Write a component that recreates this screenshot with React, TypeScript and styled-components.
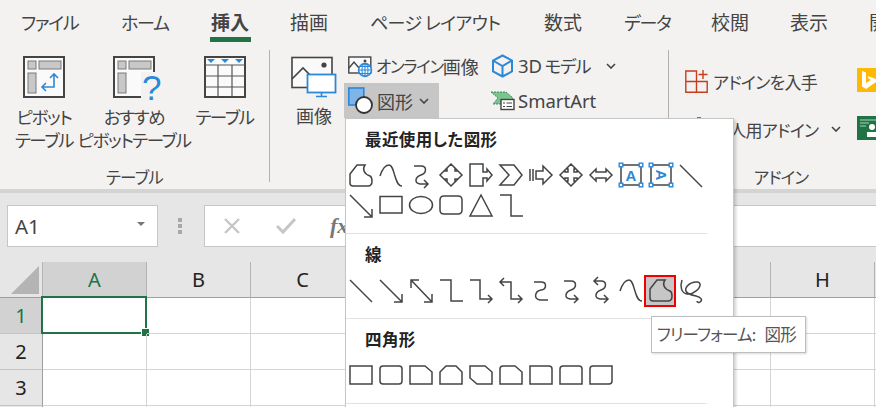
import React from "react";
import styled, { createGlobalStyle } from "styled-components";

const GlobalStyle = createGlobalStyle`
  html, body {
    margin: 0;
    padding: 0;
    background: #fff;
  }
  * {
    box-sizing: border-box;
  }
`;

const JP = `"Noto Sans CJK JP", "Noto Sans", sans-serif`;
const GREEN = "#217346";
const BLUE = "#2b88d8";
const INK = "#444";

// ---------- ribbon ----------

const Page = styled.div`
  position: relative;
  width: 876px;
  height: 407px;
  overflow: hidden;
  font-family: ${JP};
  font-feature-settings: "palt";
  color: ${INK};
`;

const Ribbon = styled.div`
  height: 189px;
  background: #f3f2f1;
`;

const TabBar = styled.div`
  display: flex;
  height: 43px;
  padding-left: 21px;
`;

const Tab = styled.div<{ $w: number; $size: number; $ls: number; $active?: boolean }>`
  position: relative;
  flex: none;
  width: ${(p) => p.$w}px;
  font-size: ${(p) => p.$size}px;
  line-height: 44px;
  letter-spacing: ${(p) => p.$ls}px;
  white-space: nowrap;
  font-weight: ${(p) => (p.$active ? 700 : 400)};

  ${(p) =>
    p.$active &&
    `
    &::after {
      content: "";
      position: absolute;
      left: -1px;
      top: 37px;
      width: 41px;
      height: 5px;
      background: ${GREEN};
    }
  `}
`;

const Groups = styled.div`
  display: flex;
  height: 146px;
`;

const Group = styled.div<{ $w: number; $pad?: number }>`
  flex: none;
  display: flex;
  flex-direction: column;
  width: ${(p) => p.$w}px;
  padding-left: ${(p) => p.$pad ?? 0}px;
`;

const GroupBody = styled.div`
  flex: 1;
  display: flex;
  min-height: 0;
`;

const GroupLabel = styled.div`
  height: 20px;
  margin-bottom: 2px;
  font-size: 16.5px;
  line-height: 20px;
  letter-spacing: -0.8px;
  text-align: center;
`;

const GroupDivider = styled.div`
  flex: none;
  width: 1px;
  height: 132px;
  margin-top: 7px;
  background: #b3b0ad;
`;

const BigButton = styled.div<{ $w: number }>`
  flex: none;
  width: ${(p) => p.$w}px;
  display: flex;
  flex-direction: column;
  align-items: center;
  padding-top: 13px;
`;

const BigIcon = styled.svg`
  display: block;
  flex: none;
  overflow: visible;
`;

const BigLabel = styled.div<{ $kanji?: boolean }>`
  margin-top: 7px;
  font-size: ${(p) => (p.$kanji ? 18 : 17.5)}px;
  line-height: 23px;
  letter-spacing: ${(p) => (p.$kanji ? 0 : -1.4)}px;
  text-align: center;
  white-space: nowrap;
`;

const SmallColumn = styled.div<{ $w: number }>`
  flex: none;
  width: ${(p) => p.$w}px;
  padding-top: 5px;
`;

const SmallItem = styled.div<{ $w?: number; $pressed?: boolean }>`
  display: flex;
  align-items: center;
  height: 35px;
  width: ${(p) => (p.$w ? `${p.$w}px` : "auto")};
  padding-left: 4px;
  font-size: 17.5px;
  letter-spacing: -1.3px;
  white-space: nowrap;
  background: ${(p) => (p.$pressed ? "#c6c6c6" : "transparent")};
`;

const SmallIcon = styled.svg`
  flex: none;
  display: block;
  margin-right: 4px;
  overflow: visible;
`;

const Chevron = styled.svg<{ $gap: number }>`
  flex: none;
  margin-left: ${(p) => p.$gap}px;
`;

const LatinText = styled.span`
  font-family: "Noto Sans", "Noto Sans CJK JP", sans-serif;
  font-size: 18.5px;
  letter-spacing: 0;
`;

const KanjiText = styled.span`
  font-size: 18px;
  letter-spacing: 0;
`;

const NarrowKana = styled.span`
  font-size: 16.5px;
  letter-spacing: -1.3px;
`;

const AddinBody = styled.div`
  display: flex;
  padding-left: 16px;
`;

const AddinColumn = styled.div`
  flex: none;
  width: 172px;
  display: flex;
  flex-direction: column;
  gap: 16px;
  padding-top: 22px;
`;

const AddinItem = styled.div`
  display: flex;
  align-items: center;
  height: 32px;
  font-size: 17px;
  letter-spacing: -0.7px;
  white-space: nowrap;
`;

const AddinTiles = styled.div`
  display: flex;
  flex-direction: column;
  gap: 24px;
  padding-top: 25px;
`;

// ---------- formula bar ----------

const FormulaBar = styled.div`
  display: flex;
  align-items: flex-start;
  height: 73px;
  padding: 12px 0 0 7px;
  background: #e6e6e6;
  border-top: 4px solid #d4d4d4;
`;

const NameBox = styled.div`
  flex: none;
  display: flex;
  align-items: center;
  justify-content: space-between;
  width: 151px;
  height: 42px;
  padding: 0 12px 0 7px;
  background: #fff;
  border: 1px solid #c6c6c6;
  font-family: "Noto Sans", sans-serif;
  font-size: 20.5px;
`;

const NameArrow = styled.span`
  width: 0;
  height: 0;
  margin-top: -4px;
  border-left: 4px solid transparent;
  border-right: 4px solid transparent;
  border-top: 4px solid #777;
`;

const Grip = styled.div`
  flex: none;
  display: flex;
  flex-direction: column;
  gap: 2px;
  width: 46px;
  padding: 13px 0 0 20px;
`;

const GripDot = styled.span`
  width: 4px;
  height: 4px;
  background: #a8a8a8;
`;

const FormulaBox = styled.div`
  flex: 1;
  display: flex;
  align-items: center;
  height: 42px;
  padding-left: 18px;
  background: #fff;
  border: 1px solid #c6c6c6;
  border-right: none;
`;

const FormulaIcon = styled.svg`
  flex: none;
  margin-right: 35px;
`;

const FxLabel = styled.span`
  margin-left: -1px;
  font-family: "Liberation Serif", serif;
  font-size: 22px;
  font-weight: 700;
  font-style: italic;
  color: #777;
`;

// ---------- sheet ----------

const Sheet = styled.div`
  display: grid;
  grid-template-columns: 43px repeat(9, 104px);
  grid-auto-rows: 36px;
  background: #fff;
  font-family: "Noto Sans", sans-serif;
  font-size: 20px;
  color: #222;
`;

const HeadCell = styled.div<{ $active?: boolean; $row?: boolean }>`
  display: flex;
  align-items: center;
  justify-content: center;
  padding-bottom: 1px;
  background: ${(p) => (p.$active ? "#d2d2d2" : "#e6e6e6")};
  color: ${(p) => (p.$active ? GREEN : "#222")};
  border-right: 1px solid ${(p) => (p.$row ? "#9e9e9e" : "#b4b4b4")};
  border-bottom: 1px solid ${(p) => (p.$row ? "#c4c4c4" : "#9e9e9e")};
`;

const CornerCell = styled.div`
  position: relative;
  background: #e6e6e6;
  border-right: 1px solid #b4b4b4;
  border-bottom: 1px solid #9e9e9e;
`;

const CornerMark = styled.span`
  position: absolute;
  left: 11px;
  top: 4px;
  width: 28px;
  height: 28px;
  background: #b4b4b4;
  clip-path: polygon(100% 0, 100% 100%, 0 100%);
`;

const Cell = styled.div`
  position: relative;
  border-right: 1px solid #d4d4d4;
  border-bottom: 1px solid #d4d4d4;
`;

const Selection = styled.div`
  position: absolute;
  inset: -2px -1px -1px -2px;
  border: 2px solid ${GREEN};
`;

const FillHandle = styled.span`
  position: absolute;
  right: -4px;
  bottom: -4px;
  width: 7px;
  height: 7px;
  background: ${GREEN};
  outline: 1px solid #fff;
`;

// ---------- shapes menu ----------

const Menu = styled.div`
  position: absolute;
  left: 345px;
  top: 118px;
  width: 389px;
  height: 300px;
  background: #fff;
  border: 1px solid #c6c6c6;
  box-shadow: 2px 2px 3px rgba(0, 0, 0, 0.18);
`;

const MenuSection = styled.section`
  width: 361px;
  padding-bottom: 13px;
  border-bottom: 1px solid #e1e1e1;
`;

const MenuHeading = styled.h3`
  margin: 0;
  height: 41px;
  padding-left: 19px;
  font-size: 16.5px;
  font-weight: 700;
  line-height: 41px;
  letter-spacing: 0.4px;
  color: #222;
`;

const ShapeGrid = styled.div`
  display: grid;
  grid-template-columns: repeat(12, 30px);
  grid-auto-rows: 30px;
`;

const ShapeCell = styled.div<{ $selected?: boolean }>`
  position: relative;
  display: flex;
  align-items: center;
  justify-content: center;

  ${(p) =>
    p.$selected &&
    `
    &::before {
      content: "";
      position: absolute;
      inset: 0 0 -2px -2px;
      background: #c6c6c6;
      border: 2px solid #f00000;
    }
  `}
`;

const ShapeSvg = styled.svg`
  position: relative;
  display: block;
  overflow: visible;
  fill: none;
  stroke: ${INK};
  stroke-width: 1.5;
`;

const Tooltip = styled.div`
  position: absolute;
  left: 651px;
  top: 316px;
  width: 155px;
  height: 37px;
  padding-left: 5px;
  background: #fff;
  border: 1px solid #bebebe;
  box-shadow: 1px 1px 2px rgba(0, 0, 0, 0.15);
  font-size: 16.5px;
  line-height: 34px;
  letter-spacing: -0.8px;
  word-spacing: 6px;
  white-space: nowrap;
  color: #555;
`;

// ---------- drawings ----------

const ChevronIcon = ({ gap }: { gap: number }) => (
  <Chevron $gap={gap} width="10" height="6" viewBox="0 0 10 6" fill="none" stroke="#444" strokeWidth="1.6">
    <path d="M1 1 L5 5 L9 1" />
  </Chevron>
);

const TableLayoutBase = () => (
  <>
    <rect x="5" y="5" width="8" height="8" fill="#c8c8c8" stroke="#7a7a7a" />
    <rect x="16" y="5" width="22" height="8" fill="#c8c8c8" stroke="#7a7a7a" />
    <rect x="5" y="17" width="8" height="20" fill="#c8c8c8" stroke="#7a7a7a" />
  </>
);

const PivotIcon = () => (
  <BigIcon width="42" height="42" viewBox="0 0 42 42" fill="none">
    <rect x="1" y="1" width="40" height="40" fill="#fafafa" stroke="#444" strokeWidth="2" />
    <TableLayoutBase />
    <path d="M31 19 V31 H20 M27 22 L31 18 L35 22 M23 27 L19 31 L23 35" stroke={BLUE} strokeWidth="1.6" />
  </BigIcon>
);

const RecommendIcon = () => (
  <BigIcon width="42" height="42" viewBox="0 0 42 42" fill="none">
    <rect x="1" y="1" width="40" height="40" fill="#fafafa" stroke="#444" strokeWidth="2" />
    <TableLayoutBase />
    <rect x="28" y="16" width="20" height="30" fill="#f3f2f1" />
    <text x="29" y="44" fontFamily="Liberation Sans, sans-serif" fontSize="35" fill={BLUE} stroke="none">
      ?
    </text>
  </BigIcon>
);

const TableIcon = () => (
  <BigIcon width="42" height="42" viewBox="0 0 42 42" fill="none">
    <rect x="1" y="1" width="40" height="40" fill="#fafafa" stroke="#444" strokeWidth="2" />
    <path d="M1 9 H41 M1 20 H41 M1 31 H41 M14 9 V41 M28 9 V41" stroke="#555" strokeWidth="1.2" />
    <path d="M3 3 H11 L7 7 Z M17 3 H25 L21 7 Z M31 3 H39 L35 7 Z" fill={BLUE} />
  </BigIcon>
);

const PictureIcon = () => (
  <BigIcon width="46" height="41" viewBox="0 0 46 41" fill="none">
    <rect x="1" y="1.5" width="40" height="30" fill="#fafafa" stroke="#444" strokeWidth="1.6" />
    <path d="M1 23 L12 12 L23 23" stroke="#444" strokeWidth="1.6" />
    <circle cx="33" cy="9" r="2.6" fill="#444" />
    <rect x="16.5" y="18.5" width="28" height="18" fill="#fff" stroke={BLUE} strokeWidth="1.8" />
    <path d="M30.5 37 V40 M25 40.5 H36" stroke={BLUE} strokeWidth="1.6" />
  </BigIcon>
);

const OnlinePictureIcon = () => (
  <SmallIcon width="25" height="22" viewBox="0 0 25 22" fill="none" style={{ marginRight: 3 }}>
    <rect x="0.8" y="2" width="22" height="16" fill="#fafafa" stroke="#444" strokeWidth="1.4" />
    <path d="M1 13 L6 7 L11 13" stroke="#444" strokeWidth="1.4" />
    <circle cx="17" cy="6" r="1.5" fill="#444" />
    <circle cx="17" cy="15" r="6.4" fill="#fff" stroke={BLUE} strokeWidth="1.6" />
    <path d="M10.6 15 H23.4 M12 11.5 H22 M12 18.5 H22 M17 8.6 V21.4" stroke={BLUE} strokeWidth="1.1" />
    <ellipse cx="17" cy="15" rx="3" ry="6.4" stroke={BLUE} strokeWidth="1.1" />
  </SmallIcon>
);

const ShapesIcon = () => (
  <SmallIcon width="25" height="28" viewBox="0 0 25 28" fill="none">
    <rect x="0.8" y="1" width="15" height="17" fill="#7eb5e8" stroke={BLUE} strokeWidth="1.6" />
    <circle cx="16" cy="18" r="8" fill="#fff" stroke="#333" strokeWidth="1.8" />
  </SmallIcon>
);

const ModelIcon = () => (
  <SmallIcon width="23" height="24" viewBox="0 0 23 24" fill="none">
    <path d="M11.5 1.5 L21 6.5 V17.5 L11.5 22.5 L2 17.5 V6.5 Z M2 6.5 L11.5 12 L21 6.5 M11.5 12 V22.5" stroke={BLUE} strokeWidth="2" />
  </SmallIcon>
);

const SmartArtIcon = () => (
  <SmallIcon width="23" height="18" viewBox="0 0 23 18" fill="none" style={{ marginRight: 4 }}>
    <path d="M0 0 H15 L22 6 L17 12 H2 L7 6 Z" fill="#7bc48f" stroke="#217346" strokeWidth="0.8" strokeDasharray="2 1" />
    <rect x="10" y="7.5" width="13" height="10" fill="#fff" stroke="#444" strokeWidth="1.4" />
    <path d="M12 11 H14 M15.5 11 H21 M12 14.5 H14 M15.5 14.5 H21" stroke="#444" />
  </SmallIcon>
);

const GetAddinIcon = () => (
  <SmallIcon width="23" height="23" viewBox="0 0 23 23" fill="none" style={{ marginRight: 5 }}>
    <path d="M0.8 1 H11.5 V22.2 H0.8 Z M0.8 11.5 H22.2 V22.2 H11.5" stroke="#c43e1c" strokeWidth="1.4" />
    <path d="M18 0 V9 M13.5 4.5 H22.5" stroke="#c43e1c" strokeWidth="1.4" />
  </SmallIcon>
);

const MyAddinIcon = () => (
  <SmallIcon width="23" height="23" viewBox="0 0 23 23" fill="none" style={{ marginRight: 5 }}>
    <rect x="12" y="-1" width="4" height="22" fill={BLUE} />
  </SmallIcon>
);

const BingTile = () => (
  <svg width="24" height="24" viewBox="0 0 24 24">
    <rect width="24" height="24" fill="#ffb900" />
    <path d="M5 3 L9 4.5 V15 L14 12 L11.5 10.5 L10.5 8 L19 11 V14 L9 21 L5 18.5 Z" fill="#fff" />
  </svg>
);

const PeopleTile = () => (
  <svg width="24" height="24" viewBox="0 0 24 24">
    <rect width="24" height="24" fill={GREEN} />
    <path d="M3 4 H21 M3 7 H12 M3 10 H9" stroke="#a9d6bb" />
    <circle cx="15" cy="11" r="3" fill="#fff" />
    <path d="M10 21 V16 H20 V21 Z" fill="#fff" />
  </svg>
);

const shapePaths: Record<string, string> = {
  freeform: "M1 11 L8 2 H16 C13 6 15 11 21 13 Q23 14 23 18 Q23 23 19 23 H4 Q1 23 1 20 Z",
  curve: "M1 13 C3 7 6 2 10 2 C16 2 15 23 23 23",
  cross: "M12 1 L17 6 H16 V8 H18 V7 L23 12 L18 17 V16 H16 V18 H17 L12 23 L7 18 H8 V16 H6 V17 L1 12 L6 7 V8 H8 V6 H7 Z",
  callout: "M1 1 H14 V9 H18 V6 L23 12 L18 18 V15 H14 V23 H1 Z",
  chevron: "M1 2 H15 L23 12 L15 22 H1 L10 12 Z",
  striped: "M1 6 V18 M4 6 V18 M7 8 H14 V3 L23 12 L14 21 V16 H7 Z",
  plus: "M12 1 L17 6 H15 V9 H18 V7 L23 12 L18 17 V15 H15 V18 H17 L12 23 L7 18 H9 V15 H6 V17 L1 12 L6 7 V9 H9 V6 H7 Z",
  leftRight: "M1 12 L7 6 V9 H17 V6 L23 12 L17 18 V15 H7 V18 Z",
  line: "M1 2 L23 24",
  lineArrow: "M1 2 L23 24 M23 16 V24 H15",
  lineDouble: "M2 2 L23 24 M2 10 V2 H10 M23 16 V24 H15",
  rect: "M1 3.5 H23 V20 H1 Z",
  rounded: "M5 3 H19 Q23 3 23 7 V17 Q23 21 19 21 H5 Q1 21 1 17 V7 Q1 3 5 3 Z",
  triangle: "M12 2 L23 23 H1 Z",
  elbow: "M1 2 H12 V23 H24",
  elbowArrow: "M1 2 H11 V21 H23 M19 17 L23 21 L19 25",
  elbowDouble: "M1 4 H12 V21 H23 M5 0 L1 4 L5 8 M19 17 L23 21 L19 25",
  connector: "M5 4 H12 C18 4 18 11 12 12 C6 13 4 21 11 22 H19",
  connectorArrow: "M5 3 H12 C18 3 18 10 12 12 C6 14 5 20 11 21 H19 M15 17 L19 21 L15 25",
  connectorDouble: "M5 3 H12 C18 3 18 10 12 12 C6 14 5 20 11 21 H19 M9 -1 L5 3 L9 7 M15 17 L19 21 L15 25",
  scribble: "M3 2 C1 8 2 15 8 16 C14 17 22 10 21 6 C20 2 10 4 7 10 C5 15 12 17 17 18 C22 19 24 22 21 24 C20 25 18 24 18 23",
  rectPlain: "M1 3 H23 V21 H1 Z",
  rectRound: "M4 3 H20 Q23 3 23 6 V18 Q23 21 20 21 H4 Q1 21 1 18 V6 Q1 3 4 3 Z",
  rectSnip: "M1 3 H16 L23 9 V21 H1 Z",
  rectSnip2: "M7 3 H17 L23 9 V21 H1 V9 Z",
  rectSnip3: "M1 3 H16 L23 9 V21 H8 L1 15 Z",
  rectSnipRound: "M4 3 H16 L23 9 V21 H1 V6 Q1 3 4 3 Z",
  rectRoundOne: "M1 3 H20 Q23 3 23 6 V21 H1 Z",
  rectRoundTop: "M4 3 H20 Q23 3 23 6 V21 H1 V6 Q1 3 4 3 Z",
  rectRoundDiag: "M4 3 H23 V18 Q23 21 20 21 H1 V6 Q1 3 4 3 Z",
};

const Shape = ({ name }: { name: string }) => (
  <ShapeSvg width="24" height="24" viewBox="0 0 24 24">
    <path d={shapePaths[name]} />
  </ShapeSvg>
);

const EllipseShape = () => (
  <ShapeSvg width="24" height="24" viewBox="0 0 24 24">
    <ellipse cx="12" cy="12" rx="11.5" ry="8.5" />
  </ShapeSvg>
);

const TextBoxShape = ({ vertical }: { vertical?: boolean }) => (
  <ShapeSvg width="24" height="24" viewBox="0 0 24 24">
    <rect x="2" y="2" width="20" height="20" />
    {[
      [2, 2],
      [22, 2],
      [2, 22],
      [22, 22],
    ].map(([x, y]) => (
      <rect key={`${x}-${y}`} x={x - 1.8} y={y - 1.8} width="3.6" height="3.6" fill="#fff" stroke={BLUE} strokeWidth="1.4" />
    ))}
    <text
      x="12"
      y="17.5"
      textAnchor="middle"
      fontFamily="Liberation Sans, sans-serif"
      fontSize="15"
      fontWeight="700"
      fill={BLUE}
      stroke="none"
      transform={vertical ? "rotate(90 12 12)" : undefined}
    >
      A
    </text>
  </ShapeSvg>
);

const recentShapes = ["freeform", "curve", "connectorArrow", "cross", "callout", "chevron", "striped", "plus", "leftRight"];
const recentShapes2 = ["lineArrow", "rect"];
const recentShapes3 = ["rounded", "triangle", "elbow"];
const lineShapes = ["line", "lineArrow", "lineDouble", "elbow", "elbowArrow", "elbowDouble", "connector", "connectorArrow", "connectorDouble", "curve", "freeform", "scribble"];
const rectShapes = ["rectPlain", "rectRound", "rectSnip", "rectSnip2", "rectSnip3", "rectSnipRound", "rectRoundOne", "rectRoundTop", "rectRoundDiag"];

const tabs = [
  { label: "ファイル", w: 100, size: 18, ls: -1.2 },
  { label: "ホーム", w: 90, size: 18, ls: -1.2 },
  { label: "挿入", w: 79, size: 19, ls: 0, active: true },
  { label: "描画", w: 80, size: 19, ls: 0 },
  { label: "ページ レイアウト", w: 174, size: 18, ls: -0.6 },
  { label: "数式", w: 80, size: 19, ls: 0 },
  { label: "データ", w: 87, size: 18, ls: -1.2 },
  { label: "校閲", w: 79, size: 19, ls: 0 },
  { label: "表示", w: 79, size: 19, ls: 0 },
  { label: "開発", w: 60, size: 19, ls: 0 },
];

const columns = ["A", "B", "C", "D", "E", "F", "G", "H", ""];

const App = () => (
  <Page>
    <GlobalStyle />
    <Ribbon>
      <TabBar>
        {tabs.map((t) => (
          <Tab key={t.label} $w={t.w} $size={t.size} $ls={t.ls} $active={t.active}>
            {t.label}
          </Tab>
        ))}
      </TabBar>
      <Groups>
        <Group $w={269}>
          <GroupBody>
            <BigButton $w={88}>
              <PivotIcon />
              <BigLabel>
                ピボット
                <br />
                テーブル
              </BigLabel>
            </BigButton>
            <BigButton $w={92}>
              <RecommendIcon />
              <BigLabel>
                おすすめ
                <br />
                ピボットテーブル
              </BigLabel>
            </BigButton>
            <BigButton $w={89}>
              <TableIcon />
              <BigLabel>テーブル</BigLabel>
            </BigButton>
          </GroupBody>
          <GroupLabel>テーブル</GroupLabel>
        </Group>
        <GroupDivider />
        <Group $w={398} $pad={14}>
          <GroupBody>
            <BigButton $w={60}>
              <PictureIcon />
              <BigLabel $kanji>画像</BigLabel>
            </BigButton>
            <SmallColumn $w={143}>
              <SmallItem>
                <OnlinePictureIcon />
                <NarrowKana>オンライン</NarrowKana>
                <KanjiText>画像</KanjiText>
              </SmallItem>
              <SmallItem $w={95} $pressed>
                <ShapesIcon />
                <KanjiText>図形</KanjiText>
                <ChevronIcon gap={6} />
              </SmallItem>
            </SmallColumn>
            <SmallColumn $w={165}>
              <SmallItem>
                <ModelIcon />
                <LatinText>3D</LatinText>&nbsp;モデル
                <ChevronIcon gap={16} />
              </SmallItem>
              <SmallItem>
                <SmartArtIcon />
                <LatinText>SmartArt</LatinText>
              </SmallItem>
            </SmallColumn>
          </GroupBody>
        </Group>
        <GroupDivider />
        <Group $w={224}>
          <GroupBody>
            <AddinBody>
              <AddinColumn>
                <AddinItem>
                  <GetAddinIcon />
                  アドインを入手
                </AddinItem>
                <AddinItem>
                  <MyAddinIcon />
                  個人用アドイン
                  <ChevronIcon gap={13} />
                </AddinItem>
              </AddinColumn>
              <AddinTiles>
                <BingTile />
                <PeopleTile />
              </AddinTiles>
            </AddinBody>
          </GroupBody>
          <GroupLabel>アドイン</GroupLabel>
        </Group>
      </Groups>
    </Ribbon>

    <FormulaBar>
      <NameBox>
        A1
        <NameArrow />
      </NameBox>
      <Grip>
        <GripDot />
        <GripDot />
        <GripDot />
      </Grip>
      <FormulaBox>
        <FormulaIcon width="18" height="18" viewBox="0 0 18 18" fill="none" stroke="#c6c6c6" strokeWidth="2.4">
          <path d="M2 2 L16 16 M16 2 L2 16" />
        </FormulaIcon>
        <FormulaIcon width="20" height="18" viewBox="0 0 20 18" fill="none" stroke="#c6c6c6" strokeWidth="3">
          <path d="M1 9 L7 15 L19 2" />
        </FormulaIcon>
        <FxLabel>fx</FxLabel>
      </FormulaBox>
    </FormulaBar>

    <Sheet>
      <CornerCell>
        <CornerMark />
      </CornerCell>
      {columns.map((c, i) => (
        <HeadCell key={i} $active={c === "A"}>
          {c}
        </HeadCell>
      ))}
      {[1, 2, 3, 4].map((r) => (
        <React.Fragment key={r}>
          <HeadCell $row $active={r === 1}>
            {r < 4 && r}
          </HeadCell>
          {columns.map((c, i) => (
            <Cell key={i}>
              {r === 1 && c === "A" && (
                <Selection>
                  <FillHandle />
                </Selection>
              )}
            </Cell>
          ))}
        </React.Fragment>
      ))}
    </Sheet>

    <Menu>
      <MenuSection>
        <MenuHeading>最近使用した図形</MenuHeading>
        <ShapeGrid>
          {recentShapes.map((s) => (
            <ShapeCell key={s}>
              <Shape name={s} />
            </ShapeCell>
          ))}
          <ShapeCell>
            <TextBoxShape />
          </ShapeCell>
          <ShapeCell>
            <TextBoxShape vertical />
          </ShapeCell>
          <ShapeCell>
            <Shape name="line" />
          </ShapeCell>
          {recentShapes2.map((s) => (
            <ShapeCell key={s}>
              <Shape name={s} />
            </ShapeCell>
          ))}
          <ShapeCell>
            <EllipseShape />
          </ShapeCell>
          {recentShapes3.map((s) => (
            <ShapeCell key={s}>
              <Shape name={s} />
            </ShapeCell>
          ))}
        </ShapeGrid>
      </MenuSection>
      <MenuSection>
        <MenuHeading>線</MenuHeading>
        <ShapeGrid>
          {lineShapes.map((s) => (
            <ShapeCell key={s} $selected={s === "freeform"}>
              <Shape name={s} />
            </ShapeCell>
          ))}
        </ShapeGrid>
      </MenuSection>
      <MenuSection>
        <MenuHeading>四角形</MenuHeading>
        <ShapeGrid>
          {rectShapes.map((s) => (
            <ShapeCell key={s}>
              <Shape name={s} />
            </ShapeCell>
          ))}
        </ShapeGrid>
      </MenuSection>
    </Menu>

    <Tooltip>フリーフォーム: 図形</Tooltip>
  </Page>
);

export default App;
